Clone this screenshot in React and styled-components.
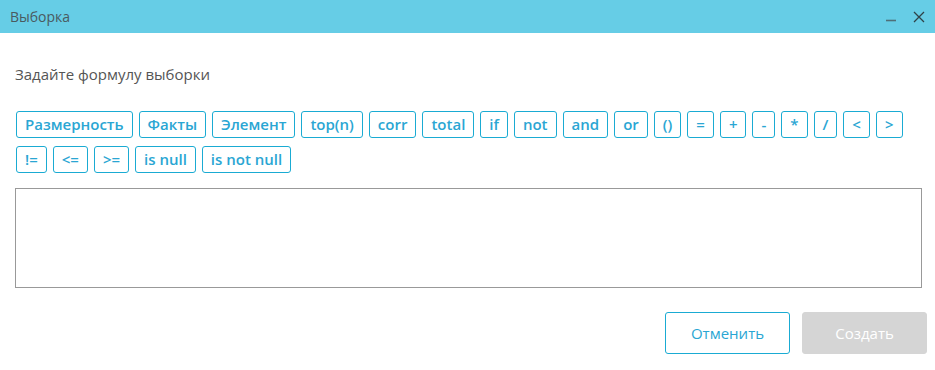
import React from "react";
import styled, { createGlobalStyle } from "styled-components";

const Global = createGlobalStyle`
  html, body { margin: 0; padding: 0; background: #fff; }
  body { font-family: "Open Sans", "Noto Sans", sans-serif; }
  * { box-sizing: border-box; }
`;

const Dialog = styled.div`
  width: 935px;
  height: 370px;
  background: #fff;
  display: flex;
  flex-direction: column;
`;

const Header = styled.div`
  height: 33px;
  background: #66cde6;
  display: flex;
  align-items: center;
  justify-content: space-between;
  padding: 0 10px 0 10px;
`;

const Title = styled.div`
  font-size: 14px;
  color: #4a5a60;
`;

const HeaderIcons = styled.div`
  display: flex;
  align-items: center;
  gap: 15px;
  padding-top: 1px;
`;

const IconBtn = styled.span`
  display: flex;
  width: 12px;
  height: 12px;
  color: #3f5a62;
`;

const Body = styled.div`
  padding: 31px 13px 0 15px;
  display: flex;
  flex-direction: column;
`;

const Label = styled.div`
  font-size: 15px;
  line-height: 20px;
  color: #555;
`;

const Tokens = styled.div`
  margin-top: 27px;
  padding-left: 1px;
  display: flex;
  flex-wrap: wrap;
  gap: 8px 6px;
`;

const Token = styled.button`
  height: 27px;
  padding: 0 8px;
  border: 1px solid #1aabd3;
  border-radius: 3px;
  background: #fff;
  color: #2aa6d3;
  font-family: "Open Sans", "Noto Sans", sans-serif;
  font-weight: 600;
  font-size: 15px;
  line-height: 25px;
  cursor: pointer;
`;

const Formula = styled.textarea`
  margin-top: 15px;
  width: 907px;
  height: 100px;
  border: 1px solid #999;
  border-radius: 0;
  resize: none;
  outline: none;
  font-family: "Open Sans", "Noto Sans", sans-serif;
  font-size: 14px;
`;

const Footer = styled.div`
  margin-top: 24px;
  padding-right: 8px;
  display: flex;
  justify-content: flex-end;
  gap: 12px;
`;

const ActionBtn = styled.button`
  width: 125px;
  height: 42px;
  border-radius: 3px;
  font-family: "Open Sans", "Noto Sans", sans-serif;
  font-size: 15px;
  border: 1px solid ${(p) => (p.$primary ? "#d5d5d5" : "#1aabd3")};
  background: ${(p) => (p.$primary ? "#d5d5d5" : "#fff")};
  color: ${(p) => (p.$primary ? "#fff" : "#2aa6d3")};
`;

const tokens = [
  "Размерность", "Факты", "Элемент", "top(n)", "corr", "total", "if", "not", "and", "or",
  "()", "=", "+", "-", "*", "/", "<", ">", "!=", "<=", ">=", "is null", "is not null",
];

export default function App() {
  return (
    <>
      <Global />
      <Dialog>
        <Header>
          <Title>Выборка</Title>
          <HeaderIcons>
            <IconBtn>
              <svg width="12" height="12" viewBox="0 0 12 12">
                <line x1="0" y1="9.5" x2="10" y2="9.5" stroke="#4f6f78" strokeWidth="1.6" />
              </svg>
            </IconBtn>
            <IconBtn>
              <svg width="12" height="12" viewBox="0 0 12 12">
                <path d="M1 1 L11 11 M11 1 L1 11" stroke="#2f4248" strokeWidth="1.3" fill="none" />
              </svg>
            </IconBtn>
          </HeaderIcons>
        </Header>
        <Body>
          <Label>Задайте формулу выборки</Label>
          <Tokens>
            {tokens.map((t) => (
              <Token key={t}>{t}</Token>
            ))}
          </Tokens>
          <Formula />
        </Body>
        <Footer>
          <ActionBtn>Отменить</ActionBtn>
          <ActionBtn $primary>Создать</ActionBtn>
        </Footer>
      </Dialog>
    </>
  );
}
